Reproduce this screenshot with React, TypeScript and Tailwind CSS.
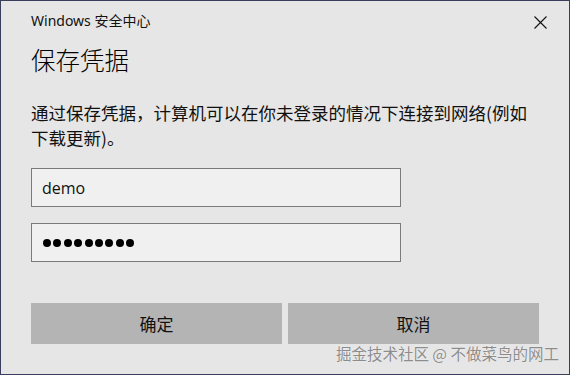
import React from "react";

export default function App() {
  return (
    <div className="w-[570px] h-[375px] bg-[#e6e6e6] border border-[#3a3d5c] relative flex flex-col pl-[30px] font-['Noto_Sans','Noto_Sans_CJK_SC',sans-serif] text-[#111]">
      <div className="mt-[10px] h-[20px] flex items-center justify-between pr-[22px]">
        <span className="text-[14px] leading-[20px] font-['Noto_Sans','Noto_Sans_CJK_SC',sans-serif]">Windows 安全中心</span>
        <svg width="13" height="13" viewBox="0 0 13 13" className="mt-[2px]">
          <path d="M0.5 0.5 L12.5 12.5 M12.5 0.5 L0.5 12.5" stroke="#111" strokeWidth="1.1" fill="none" />
        </svg>
      </div>
      <div className="mt-[13px] h-[32px] text-[24.5px] leading-[32px] font-light font-['Noto_Sans_CJK_SC',sans-serif] text-black">保存凭据</div>
      <p className="mt-[24px] w-[510px] text-[17.5px] leading-[25px] font-['Noto_Sans_CJK_SC',sans-serif]">
        通过保存凭据，计算机可以在你未登录的情况下连接到网络(例如下载更新)。
      </p>
      <div className="mt-[18px] w-[370px] h-[39px] border border-[#7a7a7a] bg-[#f0f0f0] flex items-center pl-[10px] text-[16px] font-['Open_Sans',sans-serif]">
        demo
      </div>
      <div className="mt-[16px] w-[370px] h-[39px] border border-[#7a7a7a] bg-[#f0f0f0] flex items-center pl-[11px] gap-[2.4px]">
        {Array.from({ length: 9 }).map((_, i) => (
          <span key={i} className="w-[8px] h-[8px] rounded-full bg-black" />
        ))}
      </div>
      <div className="mt-[41px] w-[508px] flex gap-[6px]">
        <div className="flex-1 h-[41px] bg-[#b4b4b4] flex items-center justify-center text-[17px] font-['Noto_Sans_CJK_SC',sans-serif]">确定</div>
        <div className="flex-1 h-[41px] bg-[#b4b4b4] flex items-center justify-center text-[17px] font-['Noto_Sans_CJK_SC',sans-serif]">取消</div>
      </div>
      <div className="absolute right-[10px] bottom-[11px] text-[15.5px] leading-[20px] text-[#8c8c8c] font-['Noto_Sans_CJK_SC',sans-serif] [text-shadow:0_0_1px_#ffffff]">
        掘金技术社区 @ 不做菜鸟的网工
      </div>
    </div>
  );
}
